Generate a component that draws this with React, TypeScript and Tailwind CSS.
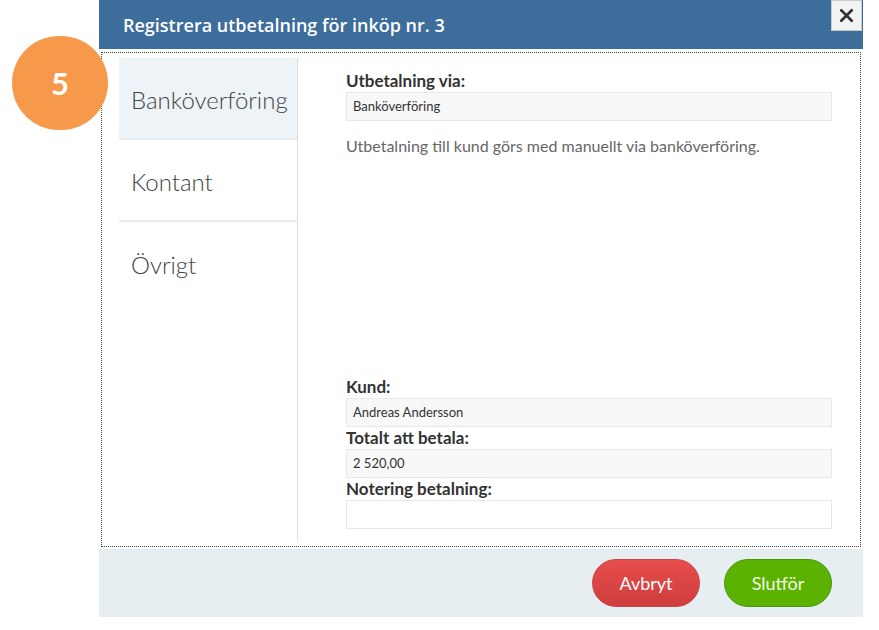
import { X } from "lucide-react";

const font = { fontFamily: "Lato, 'Open Sans', sans-serif" };

function Field({ label, value, blank }: { label: string; value: string; blank?: boolean }) {
  return (
    <div>
      <div className="h-[22px] text-[17px] font-bold leading-[22px] text-[#333]">{label}</div>
      <div
        className={
          "flex h-[29px] items-center border border-[#e4e9ee] px-[6px] text-[13px] text-[#333] " +
          (blank ? "bg-white" : "bg-[#f8f8f8]")
        }
      >
        {value}
      </div>
    </div>
  );
}

export default function App() {
  const tabs = ["Banköverföring", "Kontant", "Övrigt"];
  return (
    <div className="relative h-[630px] w-[879px] overflow-hidden bg-white" style={font}>
      <div className="absolute left-[12px] top-[36px] z-10 flex h-[94px] w-[96px] items-center justify-center rounded-full bg-[#f7994a] text-[31px] font-bold text-white">
        5
      </div>

      <div className="ml-[99px] flex w-[764px] flex-col">
        <div className="relative flex h-[49px] items-center bg-[#3c6d9b] pl-6 pt-px font-['Open_Sans',sans-serif] text-[18px] font-semibold text-white">
          Registrera utbetalning för inköp nr. 3
          <button className="absolute right-[1px] top-0 flex h-[31px] w-[31px] items-center justify-center border border-[#c8ccd0] bg-[#f3f3f3] text-[#333]">
            <X size={21} strokeWidth={3} />
          </button>
        </div>

        <div className="mx-[2px] mt-[3px] flex h-[495px] border border-dotted border-[#444]">
          <div className="mb-[5px] ml-[17px] mt-[5px] flex w-[179px] flex-col border-r border-[#dcdcdc]">
            {tabs.map((t, i) => (
              <div
                key={t}
                className={
                  "flex h-[82px] items-center pl-3 pt-[4px] text-[24px] font-light text-[#444] " +
                  (i < 2 ? "border-b-2 border-[#e8ecef] " : "") +
                  (i === 0 ? "bg-[#edf3f7]" : "")
                }
              >
                {t}
              </div>
            ))}
          </div>

          <div className="flex flex-1 flex-col pb-[17px] pl-[48px] pr-[28px] pt-[17px]">
            <Field label="Utbetalning via:" value="Banköverföring" />
            <p className="mt-[15px] text-[16px] leading-[20px] text-[#666]">
              Utbetalning till kund görs med manuellt via banköverföring.
            </p>
            <div className="flex-1" />
            <Field label="Kund:" value="Andreas Andersson" />
            <Field label="Totalt att betala:" value="2 520,00" />
            <Field label="Notering betalning:" value="" blank />
          </div>
        </div>

        <div className="mt-[2px] flex h-[68px] items-center justify-end gap-6 bg-[#e7eef2] pr-[31px]">
          <button className="h-[48px] w-[108px] rounded-full border border-[#c94444] bg-gradient-to-b from-[#e74d4d] to-[#cf3d3d] text-[18px] text-white">
            Avbryt
          </button>
          <button className="h-[48px] w-[108px] rounded-full border border-[#489a0c] bg-[#5cb200] text-[18px] text-[#eefbe0]">
            Slutför
          </button>
        </div>
      </div>
    </div>
  );
}
